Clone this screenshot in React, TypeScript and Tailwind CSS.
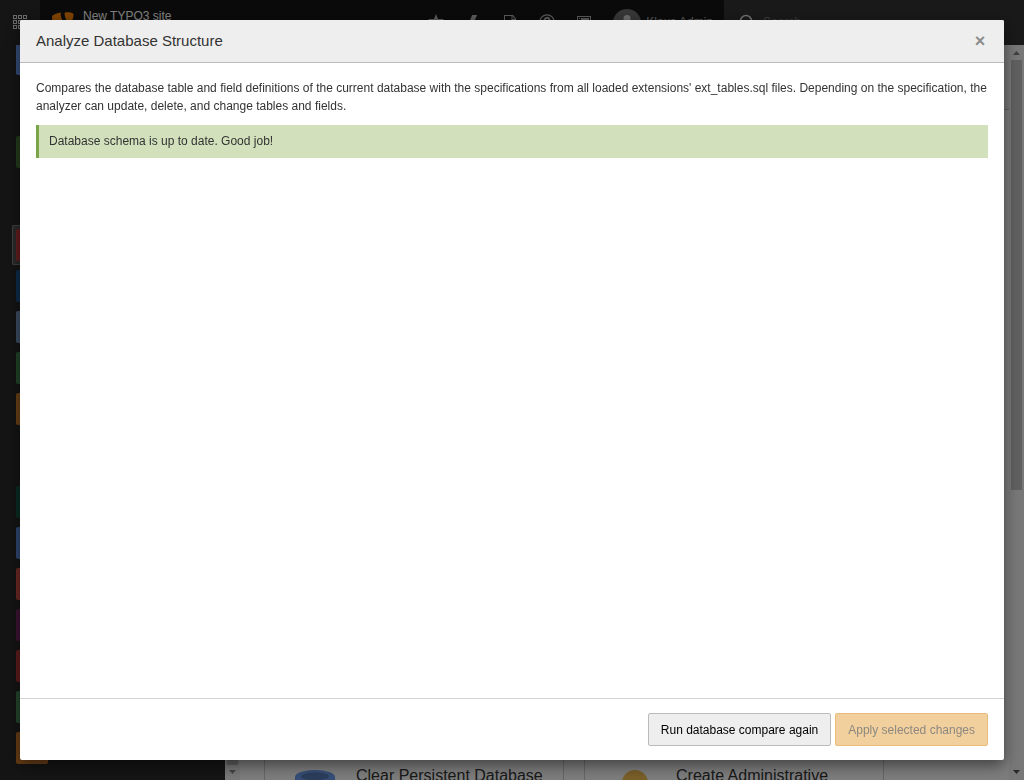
import type { ReactNode } from "react";

const moduleGroups: { color: string; active?: boolean }[][] = [
  [{ color: "bg-[#6a9af4]" }],
  [{ color: "bg-[#4a7a3a]" }],
  [
    { color: "bg-[#c83c3c]", active: true },
    { color: "bg-[#1c5a98]" },
    { color: "bg-[#7a9cc8]" },
    { color: "bg-[#428a50]" },
    { color: "bg-[#d4822c]" },
  ],
  [
    { color: "bg-[#145a48]" },
    { color: "bg-[#6090ea]" },
    { color: "bg-[#dc5448]" },
    { color: "bg-[#7c2866]" },
    { color: "bg-[#bc3838]" },
    { color: "bg-[#488c58]" },
    { color: "bg-[#d47c2c]" },
  ],
];

function ToolbarButton({ label, children }: { label: string; children: ReactNode }) {
  return (
    <button type="button" aria-label={label} className="flex h-full w-[37px] items-center justify-center pb-px text-[#b4b4b4]">
      <svg viewBox="0 0 16 16" className="size-4" fill="currentColor">
        {children}
      </svg>
    </button>
  );
}

function Header() {
  return (
    <header className="flex h-[45px] shrink-0 bg-[#151515] text-xs">
      <button type="button" aria-label="Toggle menu" className="flex w-10 items-center justify-center bg-[#2a2a2a] pb-px text-[#d8d8d8]">
        <svg viewBox="0 0 14 14" className="size-3.5" fill="none" stroke="currentColor">
          {[0, 5, 10].map((y) =>
            [0, 5, 10].map((x) => <rect key={`${x}-${y}`} x={x + 0.5} y={y + 0.5} width="3" height="3" />),
          )}
        </svg>
      </button>
      <a href="#" className="flex gap-1.5 pt-2 pl-[9px] text-white">
        <svg viewBox="0 0 16 16" className="mt-px size-7" fill="#ff8700">
          <path d="M11.1 10.3c-.2 0-.3.1-.5.1-1.6 0-3.9-5.5-3.9-7.3 0-.7.2-.9.4-1.1-2 .2-4.4 1-5.2 1.9-.1.2-.2.6-.2 1 0 2.9 3.1 9.4 5.2 9.4 1.1 0 2.8-1.7 4.2-4" />
          <path d="M10.1 1.9c2 0 3.9.3 3.9 1.4 0 2.3-1.4 5-2.2 5-1.3 0-2.9-3.6-2.9-5.4 0-.8.3-1 1.2-1" />
        </svg>
        <span className="leading-4">New TYPO3 site</span>
      </a>
      <nav className="ml-auto flex">
        <ToolbarButton label="Bookmarks">
          <path d="M8 0l2 5h6l-4.500 4 1.700 6L8 11.500 2.800 15l1.700-6L0 5h6z" />
        </ToolbarButton>
        <ToolbarButton label="Clear cache">
          <path d="M7.200 1h5L9.800 6H12L5.500 15l1.600-6.400H4z" />
        </ToolbarButton>
        <ToolbarButton label="Open documents">
          <path fillRule="evenodd" d="M2 1h9l3 3.500V15H2zm1 1v12h10V6H9.500V2zm7.500 0v3H13z" />
        </ToolbarButton>
        <ToolbarButton label="Help">
          <circle cx="8" cy="8" r="7.200" fill="none" stroke="currentColor" strokeWidth="1.300" />
          <path d="M5.500 6.400a2.500 2.500 0 1 1 3.600 2.200c-.8.4-1.100.8-1.100 1.600" fill="none" stroke="currentColor" strokeWidth="2" />
          <circle cx="8" cy="12" r="1" />
        </ToolbarButton>
        <ToolbarButton label="System information">
          <path fillRule="evenodd" d="M1 2h14v12H1zm1 1v10h12V3z" />
          <path d="M3 4h1v1H3zM3 6h1v1H3zM3 8h1v1H3zM5 4h8v3H5zM5 8h8v1H5z" />
        </ToolbarButton>
        <button type="button" className="flex items-center gap-[5px] pr-[11px] pl-[11px] text-[#b4b4b4]">
          <svg viewBox="0 0 28 28" className="size-7">
            <circle cx="14" cy="14" r="14" fill="#6e6e6e" />
            <circle cx="14" cy="9.5" r="3.5" fill="#d8d8d8" />
            <path d="M7 22c0-6 3-9 7-9s7 3 7 9z" fill="#d8d8d8" />
          </svg>
          <span className="pb-0.5 leading-4">Klaus Admin</span>
        </button>
      </nav>
      <label className="flex w-[300px] shrink-0 items-center gap-2 bg-[#333] pb-px pl-[15px] text-[#e0e0e0]">
        <svg viewBox="0 0 16 16" className="size-4" fill="none" stroke="currentColor" strokeWidth="1.5">
          <circle cx="7" cy="7" r="5.5" />
          <path d="M11 11l4 4" />
        </svg>
        <input type="search" placeholder="Search" aria-label="Search" className="min-w-0 flex-1 bg-transparent outline-none placeholder:text-[#777]" />
      </label>
    </header>
  );
}

function ModuleMenu() {
  return (
    <nav aria-label="Modules" className="w-[225px] shrink-0 overflow-hidden bg-[#292929] pl-3">
      <div className="-mt-1.5 flex flex-col gap-[53px]">
        {moduleGroups.map((group, g) => (
          <div key={g} className="flex flex-col gap-px">
            {group.map((item, i) => (
              <a
                key={i}
                href="#"
                className={`flex h-10 items-center rounded-l-xs ${item.active ? "border border-r-0 border-[#808080] bg-[#525252] pl-[3px]" : "pl-1"}`}
              >
                <span className={`size-8 rounded-xs ${item.color}`} />
              </a>
            ))}
          </div>
        ))}
      </div>
    </nav>
  );
}

function ScrollTrack({ lower }: { lower?: boolean }) {
  return (
    <div aria-hidden="true" className="flex w-[15px] shrink-0 flex-col items-center justify-between bg-[#f1f1f1]">
      <svg viewBox="0 0 15 15" className="size-[15px] shrink-0" fill="#7d7d7d">
        <path d="M4 10h7L7.500 6z" />
      </svg>
      <div className={`flex min-h-0 w-[11px] flex-1 flex-col ${lower ? "justify-end" : ""}`}>
        <div className={lower ? "h-2/3 bg-[#c1c1c1]" : "h-[61%] bg-[#c1c1c1]"} />
      </div>
      <svg viewBox="0 0 15 15" className="size-[15px] shrink-0" fill={lower ? "#8a8a8a" : "#505050"}>
        <path d="M4 5h7L7.500 9z" />
      </svg>
    </div>
  );
}

function MaintenanceCard({ title, icon }: { title: string; icon: ReactNode }) {
  return (
    <article className="flex h-10 w-[300px] gap-[17px] border-x border-[#ccc] bg-[#fafafa] pt-[26px] pl-[26px]">
      <svg viewBox="0 0 48 48" className="size-12 shrink-0">
        {icon}
      </svg>
      <h2 className="text-base leading-5 whitespace-nowrap text-[#333]">{title}</h2>
    </article>
  );
}

function Content() {
  return (
    <main className="flex min-w-0 flex-1 flex-col overflow-hidden bg-[#fafafa]">
      <div className="h-[65px] shrink-0 border-b border-[#c3c3c3] bg-[#eee]" />
      <div className="mt-auto flex gap-5 pl-6">
        <MaintenanceCard
          title="Clear Persistent Database"
          icon={
            <>
              <path d="M4 11v30h40V11z" fill="#6694e0" />
              <ellipse cx="24" cy="11" rx="20" ry="7" fill="#6c9cec" />
              <ellipse cx="24" cy="10.500" rx="14" ry="4" fill="#587bb8" />
            </>
          }
        />
        <MaintenanceCard title="Create Administrative" icon={<circle cx="24" cy="17" r="13" fill="#f2bd50" />} />
      </div>
    </main>
  );
}

function DatabaseModal() {
  return (
    <div className="fixed inset-0 flex bg-black/50 p-5">
      <section
        role="dialog"
        aria-modal="true"
        aria-labelledby="modal-title"
        className="flex min-w-0 flex-1 flex-col overflow-hidden rounded-xs bg-white text-xs text-[#333] shadow-[0_5px_15px_rgba(0,0,0,0.5)]"
      >
        <header className="flex h-[43px] shrink-0 items-center justify-between border-b border-[#bbb] bg-[#eee] px-4">
          <h1 id="modal-title" className="text-[15px] leading-5">
            Analyze Database Structure
          </h1>
          <button type="button" aria-label="Close" className="w-4 text-center text-lg leading-5 font-bold text-[#8c8c8c]">
            ×
          </button>
        </header>
        <div className="flex-1 overflow-auto p-4 leading-[18px]">
          <p>
            Compares the database table and field definitions of the current database with the specifications from all
            loaded extensions' ext_tables.sql files. Depending on the specification, the analyzer can update, delete,
            and change tables and fields.
          </p>
          <p role="status" className="mt-2.5 border-l-[3px] border-[#79a548] bg-[#d2e1bc] pt-[7px] pb-2 pl-2.5">
            Database schema is up to date. Good job!
          </p>
        </div>
        <footer className="flex shrink-0 justify-end gap-1 border-t border-[#d3d3d3] px-4 py-3.5">
          <button type="button" className="h-[33px] rounded-xs border border-[#bbb] bg-[#eee] px-3 text-black">
            Run database compare again
          </button>
          <button type="button" disabled className="h-[33px] rounded-xs border border-[#e8bd7c] bg-[#f2d09e] px-3 text-[#8c8880]">
            Apply selected changes
          </button>
        </footer>
      </section>
    </div>
  );
}

export default function App() {
  return (
    <div className="flex h-screen flex-col overflow-hidden font-['Liberation_Sans',Arial,sans-serif]">
      <Header />
      <div className="flex min-h-0 flex-1">
        <ModuleMenu />
        <ScrollTrack lower />
        <Content />
        <ScrollTrack />
      </div>
      <DatabaseModal />
    </div>
  );
}
